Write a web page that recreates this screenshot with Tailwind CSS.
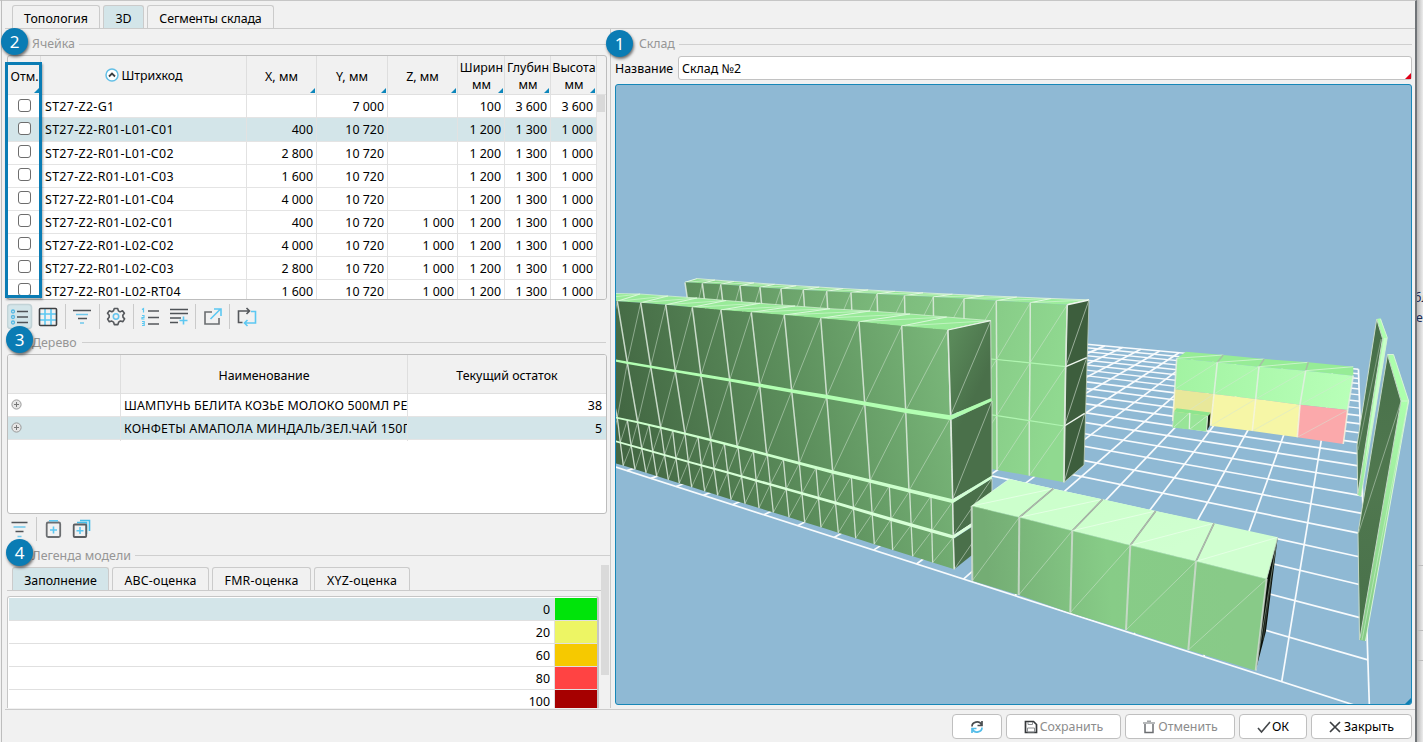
<!DOCTYPE html>
<html lang="ru">
<head>
<meta charset="utf-8">
<title>Склад</title>
<script src="https://cdn.jsdelivr.net/npm/@tailwindcss/browser@4"></script>
</head>
<body class="w-[1423px] h-[742px] overflow-hidden bg-[#e6e6e6] font-['Noto_Sans','Open_Sans',sans-serif] text-[12.4px] leading-4 text-black">
<div class="relative flex w-[1423px] h-[742px] overflow-hidden">
  <div class="relative flex flex-col w-[1417px] h-full shrink-0 bg-[#f1f1f1] border-t border-t-[#c6c6c6] border-r-2 border-r-[#707478]">
    <!-- page tabs -->
    <div class="flex gap-[3px] h-[28px] pt-1 border-b border-[#cbcbcb] ml-[5px] pl-[7px]">
      <div class="flex w-[88px] justify-center items-center pt-1 border border-b-0 border-[#cbcbcb] rounded-t-[3px] whitespace-nowrap tracking-[0.05px]">Топология</div>
      <div class="flex w-[41px] justify-center items-center pt-1 border border-b-0 border-[#cbcbcb] rounded-t-[3px] bg-[#d3e5e9]">3D</div>
      <div class="flex w-[127px] justify-center items-center pt-1 border border-b-0 border-[#cbcbcb] rounded-t-[3px] whitespace-nowrap tracking-[-0.1px]">Сегменты склада</div>
    </div>
    <div class="flex h-[680px]">
      <!-- left column -->
      <div class="flex flex-col w-[611px] shrink-0 h-[679px] pl-[7px] border-r border-[#c9c9c9] overflow-hidden">
        <div class="flex items-center h-[26px] shrink-0 pl-[25px] pr-1 pt-1 gap-1 text-[#969696]"><span class="w-[43px]">Ячейка</span><i class="flex-1 h-px bg-[#cfcfcf]"></i></div>
        <div class="flex flex-col h-[245px] w-[600px] shrink-0 border border-[#bdbdbd] rounded-[3px] overflow-hidden">
          <div id="cellHead" class="grid grid-cols-[33px_206px_70px_71px_70px_47px_46px_46px] h-[39px] shrink-0 border-b border-[#e0e0e0] text-center"></div>
          <div class="flex flex-1 overflow-hidden">
            <div id="cellRows" class="w-[589px]"></div>
            <div class="flex-1 bg-[#f1f1f1]"><div class="w-[8px] h-[17px] bg-[#d9d9d9]"></div></div>
          </div>
        </div>
        <!-- cell toolbar -->
        <div class="flex h-[33px] shrink-0 items-center">
          <svg width="260" height="33" viewBox="7 300 260 33" fill="none" stroke-width="1.6">
            <rect x="7.5" y="304.5" width="24" height="24" rx="3" fill="#d3e5e9" stroke="#c2d3d7"/>
            <g stroke="#4f5357"><path d="M17 311.500h11M17 317h11M17 322.500h11"/></g>
            <g stroke="#56b9e4" stroke-width="1.3"><circle cx="13" cy="311.500" r="1.500"/><circle cx="13" cy="317" r="1.500"/><circle cx="13" cy="322.500" r="1.500"/></g>
            <path stroke="#5cc8f2" d="M45 309v16M51 309v16M40 314h16M40 320h16"/><rect x="39.500" y="308.500" width="17" height="17" rx="1" stroke="#3d4043"/>
            <path stroke="#cacaca" stroke-width="1" d="M65.500 304v25M99.500 304v25M133.500 304v25M195.500 304v25M229.500 304v25"/>
            <path stroke="#4f5357" d="M73 310.500h18M78 318.500h9"/><path stroke="#6fc8ec" d="M76 314.500h12M80 323h4"/>
            <path stroke="#55585c" stroke-linejoin="round" d="M114.300 308.500h3.400l.7 2.400 1.700 1 2.400-1.200 1.900 2.500-1.600 2 .2 1.900 1.600 1.800-1.700 2.700-2.500-.6-1.800 1.200-.7 2.400h-3.600l-.8-2.500-1.700-1-2.500.7-1.700-2.700 1.600-1.800v-2l-1.700-2 1.900-2.500 2.400 1 1.700-1z"/><circle cx="116" cy="316.500" r="2.700" stroke="#64c4ee"/>
            <path stroke="#55585c" d="M148 311h11M148 317.500h11M148 324h11"/>
            <path stroke="#5cc8f2" stroke-width="1.2" d="M142 309.500l1.500-1v4M142 315.500h2v2h-2v1.500h2.500M142 321.500h2.200v4H142M142 323.500h2"/>
            <path stroke="#4f5357" d="M170 309.500h18M170 313.500h18M170 318h11M170 322.500h8"/><path stroke="#5cc8f2" d="M183.500 316.500v8M179.500 320.500h8"/>
            <path stroke="#6a6d70" d="M212 312h-7v12h14v-6"/><path stroke="#5cc8f2" d="M210.500 319l10-10M214 309h7v7"/>
            <path stroke="#55585c" d="M242.500 322.500h-4V311H249M246.500 308l3 3-3 3"/><path stroke="#5cc8f2" d="M251 311.500h4.500V323H245M247.500 320l-3 3 3 3"/>
          </svg>
        </div>
        <div class="flex items-center h-[21px] shrink-0 pl-[25px] pr-1 gap-1 pb-[2px] text-[#969696]"><span class="w-[46px]">Дерево</span><i class="flex-1 h-px bg-[#cfcfcf]"></i></div>
        <div class="flex flex-col h-[160px] w-[600px] shrink-0 border border-[#bdbdbd] rounded-[3px] bg-white overflow-hidden">
          <div class="grid grid-cols-[113px_287px_198px] h-[39px] shrink-0 bg-[#f1f1f1] border-b border-[#e0e0e0] text-center leading-[41px]"><div class="border-r border-[#dedede]"></div><div class="border-r border-[#dedede]">Наименование</div><div>Текущий остаток</div></div>
          <div id="treeRows"></div>
        </div>
        <div class="flex h-[32px] shrink-0 items-center">
          <svg width="100" height="32" viewBox="7 514 100 32" fill="none" stroke-width="1.600">
            <path stroke="#4f5357" d="M11.500 522.500h16M15.500 531.500h8"/><path stroke="#6fc8ec" d="M13.500 527h12M17.500 536.500h4"/>
            <path stroke="#cacaca" stroke-width="1" d="M36.500 517v24"/>
            <rect x="46.700" y="522.500" width="13.500" height="14.500" rx="1.500" stroke="#6b6e71" stroke-width="1.800"/><path stroke="#5cc8f2" d="M49 520.700h9M53.500 526.500v7M50 530h7"/>
            <path stroke="#42bde9" d="M77 522.500h9.500V534M80 520.500h9.500V531"/><rect x="73.700" y="524.500" width="12.500" height="12.500" rx="1" stroke="#5b5e61" stroke-width="1.800"/><path stroke="#5cc8f2" d="M80 527v7M76.500 530.700h7"/>
          </svg>
        </div>
        <div class="flex items-center h-[19px] shrink-0 pl-[25px] gap-1 text-[#969696]"><span class="w-[99px] whitespace-nowrap">Легенда модели</span><i class="flex-1 h-px bg-[#cfcfcf]"></i></div>
        <div class="flex h-[143px] shrink-0 overflow-hidden">
          <div class="w-[594px] shrink-0">
            <div class="flex gap-[3px] h-[26px] pl-[5px] pt-[2px] border-b border-[#cbcbcb]">
              <div class="flex w-[97px] justify-center items-center pt-[3px] border border-b-0 border-[#cbcbcb] rounded-t-[3px] bg-[#d3e5e9]">Заполнение</div>
              <div class="flex w-[97px] justify-center items-center pt-[3px] border border-b-0 border-[#cbcbcb] rounded-t-[3px] tracking-[0.15px]">ABC-оценка</div>
              <div class="flex w-[99px] justify-center items-center pt-[3px] border border-b-0 border-[#cbcbcb] rounded-t-[3px] tracking-[0.2px]">FMR-оценка</div>
              <div class="flex w-[96px] justify-center items-center pt-[3px] border border-b-0 border-[#cbcbcb] rounded-t-[3px] tracking-[0.2px]">XYZ-оценка</div>
            </div>
            <div id="legend" class="w-[592px] mt-[5px] h-[140px] border-2 border-l border-t border-[#c6c6c6] rounded-[3px] bg-white overflow-hidden pt-px pl-px"></div>
          </div>
          <div class="w-[8px] h-[110px] bg-[#dadada]"></div>
        </div>
      </div>
      <!-- warehouse view -->
      <div class="flex flex-col pl-[4px] w-[801px]">
        <div class="flex items-center h-[26px] pt-1 pl-6 gap-1 text-[#969696]"><span class="w-[36px] tracking-[-0.1px]">Склад</span><i class="flex-1 h-px bg-[#cfcfcf]"></i></div>
        <div class="flex h-[25px] items-center"><span class="w-[63px] whitespace-nowrap pt-[2px]">Название</span><div class="relative flex items-center flex-1 h-[24px] bg-white border border-[#c2c2c2] rounded-[3px] px-[3px] pt-[2px]">Склад №2<i class="absolute right-0 bottom-0 border-[3px] border-t-transparent border-l-transparent border-[#e00018]"></i></div></div>
        <div class="relative mt-1 w-[797px] h-[621px] bg-[#8fb9d4] border border-[#1787b8] rounded-[3px] overflow-hidden">
          <svg id="scene" class="block" width="796" height="620" viewBox="616 85 796 620"></svg>
          <svg class="absolute right-0 bottom-0" width="6" height="6"><path d="M6 0v6H0z" fill="#0d7fb4"/></svg>
        </div>
      </div>
    </div>
    <div class="ml-[5px] h-px bg-[#cbcbcb]"></div>
    <div class="flex justify-end gap-1 h-[32px] pt-[4px] pr-[3px] text-[#8c8c8c]">
      <div class="flex w-[50px] h-[25px] items-center justify-center bg-white border border-[#bfbfbf] rounded-[4px]"><svg width="16" height="16" fill="none" stroke-width="1.700"><path stroke="#4a4d50" d="M3 7.500a5 4.500 0 0 1 9.500-2M13 2v4.500H8.500"/><path stroke="#54bde9" d="M13 8.500a5 4.500 0 0 1-9.500 2M3 14V9.500h4.500"/></svg></div>
      <div class="flex w-[115px] h-[25px] items-center justify-center gap-[2px] bg-white border border-[#bfbfbf] rounded-[4px]"><svg width="14" height="14" fill="none" stroke="#35383b" stroke-width="1.700"><path d="M1.500 1.500h8l3 3v8h-11z"/><path stroke="#8c8f92" stroke-width="1" d="M4 2v2.500h4.500V2M3.500 8h7v4h-7z"/></svg>Сохранить</div>
      <div class="flex w-[110px] h-[25px] items-center justify-center gap-[2px] bg-white border border-[#bfbfbf] rounded-[4px]"><svg width="14" height="14" fill="none" stroke="#6b6e71" stroke-width="1.500"><path d="M3 4v8.500h8V4"/><path stroke="#a0a3a5" d="M1 3h12M5 1.300h4"/></svg>Отменить</div>
      <div class="flex w-[68px] h-[25px] items-center justify-center gap-[1px] bg-white border border-[#bfbfbf] rounded-[4px] text-black"><svg width="14" height="14" fill="none" stroke="#44474a" stroke-width="1.600"><path d="M1 8l3.500 4L13 2"/></svg>ОК</div>
      <div class="flex w-[101px] h-[25px] items-center justify-center gap-[3px] bg-white border border-[#bfbfbf] rounded-[4px] text-black"><svg width="12" height="12" fill="none" stroke="#3b3e41" stroke-width="1.700"><path d="M1 1l10 10M11 1L1 11"/></svg>Закрыть</div>
    </div>
  </div>
  <!-- window behind -->
  <div class="flex flex-col flex-1 overflow-hidden bg-linear-to-r from-[#b9b9b9] to-[#ececec] text-[#1c2b55] pt-[290px]"><span class="-ml-[3px]">бл</span><span class="mt-1 -ml-px">е</span><i class="mt-[239px] h-px bg-[#bcbcbc] shrink-0"></i><i class="mt-[64px] h-px bg-[#bcbcbc] shrink-0"></i><i class="mt-[29px] h-px bg-[#bcbcbc] shrink-0"></i></div>
  <!-- left window edge, highlight frame and numbered callouts -->
  <div class="absolute left-[1px] top-0 w-px h-full bg-[#bdbdbd]"></div>
  <div class="absolute left-[5px] top-[62px] w-[37px] h-[236px] border-[3px] border-[#0a7cb4] shadow-[1px_2px_2px_rgba(0,0,0,.3)]"></div>
  <div class="absolute left-[1px] top-[28px] size-[27px] rounded-full bg-[#0a7cb4] text-white text-[17px] leading-[27px] text-center shadow-[1px_2px_3px_rgba(0,0,0,.55)]">2</div>
  <div class="absolute left-[606px] top-[30px] size-[27px] rounded-full bg-[#0a7cb4] text-white text-[17px] leading-[27px] text-center shadow-[1px_2px_3px_rgba(0,0,0,.55)]">1</div>
  <div class="absolute left-[6px] top-[326px] size-[27px] rounded-full bg-[#0a7cb4] text-white text-[17px] leading-[27px] text-center shadow-[1px_2px_3px_rgba(0,0,0,.55)]">3</div>
  <div class="absolute left-[6px] top-[539px] size-[27px] rounded-full bg-[#0a7cb4] text-white text-[17px] leading-[27px] text-center shadow-[1px_2px_3px_rgba(0,0,0,.55)]">4</div>
</div>
<script>
const mark = '<svg class="absolute right-px bottom-px" width="5" height="5"><path d="M5 0v5H0z" fill="#0d86bb"/></svg>';
const sort = '<svg class="inline-block mr-[2px] mb-[3px]" width="14" height="14" fill="none"><circle cx="7" cy="7" r="6" fill="#fff" stroke="#62bfe6" stroke-width="1.500"/><path d="M4 8.500l3-3 3 3" stroke="#3c3f42" stroke-width="1.800"/></svg>';
const heads = ['Отм.', sort + 'Штрихкод', 'X, мм', 'Y, мм', 'Z, мм', 'Ширин<br>мм', 'Глубин<br>мм', 'Высота<br>мм'];
cellHead.innerHTML = heads.map((h, i) => `<div class="relative flex items-center justify-center overflow-hidden whitespace-nowrap border-r border-[#dedede] pt-[2px] leading-[17px] ${i > 4 || i < 2 ? 'pl-px' : ''}"><span>${h}</span>${i == 1 ? '' : mark}</div>`).join('');
const P = 'ST27-Z2-';
const rows = [
  [P + 'G1', '', '7 000', '', '100', '3 600', '3 600'],
  [P + 'R01-L01-C01', '400', '10 720', '', '1 200', '1 300', '1 000'],
  [P + 'R01-L01-C02', '2 800', '10 720', '', '1 200', '1 300', '1 000'],
  [P + 'R01-L01-C03', '1 600', '10 720', '', '1 200', '1 300', '1 000'],
  [P + 'R01-L01-C04', '4 000', '10 720', '', '1 200', '1 300', '1 000'],
  [P + 'R01-L02-C01', '400', '10 720', '1 000', '1 200', '1 300', '1 000'],
  [P + 'R01-L02-C02', '4 000', '10 720', '1 000', '1 200', '1 300', '1 000'],
  [P + 'R01-L02-C03', '2 800', '10 720', '1 000', '1 200', '1 300', '1 000'],
  [P + 'R01-L02-RT04', '1 600', '10 720', '1 000', '1 200', '1 300', '1 000']];
cellRows.innerHTML = rows.map((r, i) => `<div class="grid grid-cols-[33px_206px_70px_71px_70px_47px_46px_46px] ${i == 1 ? 'h-[24px]' : 'h-[23px]'} border-b border-[#e4e4e4] leading-[23px] whitespace-nowrap ${i == 1 ? 'bg-[#d3e5e9]' : 'bg-white'}"><div class="pl-[10px] ${i > 1 ? 'pt-[3px]' : 'pt-[4px]'} border-r border-[#e2e2e2]"><div class="size-[13px] border border-[#6d6d6d] rounded-[3px] bg-white"></div></div>` +
  r.map((c, j) => `<div class="border-r border-[#e2e2e2] ${j ? 'text-right pr-[3px]' : 'pl-[4px] tracking-[0.33px]'}">${c}</div>`).join('') + '</div>').join('');
const plus = '<svg width="11" height="11" fill="none" stroke="#777"><circle cx="5.500" cy="5.500" r="4.600" fill="#e6e6e6" stroke="#999"/><path d="M3 5.500h5M5.500 3v5"/></svg>';
treeRows.innerHTML = [['ШАМПУНЬ БЕЛИТА КОЗЬЕ МОЛОКО 500МЛ РЕ', 38], ['КОНФЕТЫ АМАПОЛА МИНДАЛЬ/ЗЕЛ.ЧАЙ 150Г', 5]].map((r, i) =>
  `<div class="grid grid-cols-[113px_287px_198px] h-[23px] leading-[24px] whitespace-nowrap border-b border-[#e4e4e4] ${i ? 'bg-[#d3e5e9]' : 'bg-white'}"><div class="pl-[3px] pt-[5px] border-r border-[#e2e2e2]">${plus}</div><div class="pl-[3px] overflow-hidden border-r border-[#e2e2e2] ${i ? 'tracking-[0.2px]' : 'tracking-[0.17px]'}">${r[0]}</div><div class="text-right pr-[4px]">${r[1]}</div></div>`).join('');
legend.innerHTML = [[0, '#00e40a'], [20, '#edf564'], [60, '#f6c900'], [80, '#ff4343'], [100, '#a60000']].map((r, i) =>
  `<div class="flex h-[23px] border-b border-[#e0e0e0] leading-[23px] ${i ? '' : 'bg-[#d3e5e9]'}"><div class="flex-1 text-right pr-[4px] border-r border-[#e0e0e0]">${r[0]}</div><div class="w-[42px]" style="background:${r[1]}"></div></div>`).join('');

/* 3D view */
let out = '';
const poly = (p, f) => out += `<polygon points="${p.map(q => q.join()).join(' ')}" fill="${f}"/>`;
const seg = (a, b, c = '#e2eee2', w = 1.1, o = 1) => out += `<line x1="${a[0]}" y1="${a[1]}" x2="${b[0]}" y2="${b[1]}" stroke="${c}" stroke-width="${w}" stroke-opacity="${o}"/>`;
const pl = (p, c, w) => out += `<polyline points="${p.map(q => q.join()).join(' ')}" fill="none" stroke="${c}" stroke-width="${w}"/>`;
const face = (t, b, f) => poly([...t, ...[...b].reverse()], f);
const cells = (t, b, w = 1.2, c = '#dfecdf', o = .85) => t.forEach((p, i) => { seg(p, b[i], c, w, o); if (t[i + 1]) seg(b[i], t[i + 1], '#d4e6d4', 1, .5); });
const grad = (id, x1, y1, x2, y2, ...s) => out += `<linearGradient id="${id}" gradientUnits="userSpaceOnUse" x1="${x1}" y1="${y1}" x2="${x2}" y2="${y2}">${s.map((c, i) => `<stop offset="${i / (s.length - 1)}" stop-color="${c}"/>`).join('')}</linearGradient>`;
grad('gA', 616, 420, 950, 340, '#426642', '#5b8d5b', '#7ab87a');
grad('gAs', 950, 340, 992, 360, '#5a8a5a', '#4a704a');
grad('gB', 690, 290, 1067, 350, '#5c8e5c', '#7bb97b', '#90d990');
grad('gBt', 690, 282, 1089, 300, '#8fdc8f', '#9eee9e');
grad('gC', 990, 600, 1230, 580, '#74ad74', '#87cc87', '#88ca88');
grad('gCt', 1120, 490, 1150, 560, '#ccffcc', '#d0ffd0');
grad('gD', 1175, 370, 1350, 390, '#a2f3a2', '#b8ffb8');
grad('gP', 1375, 330, 1360, 640, '#48704a', '#50784f', '#48704a');
grad('gL', 1400, 400, 1364, 640, '#adffad', '#85c985');

/* floor grid */
const G = (u, v) => { const w = 1 + .1193 * v + .0632 * u; return [(1369.5 + 161.56 * v - 6.79 * u) / w, (710 + 28.57 * v + 14.79 * u) / w]; };
for (let v = 0; v <= 22; v++) seg(G(0, v), G(24, v), '#f8fbfd', v > 14 ? 1.4 : 1.7);
for (let u = 0; u <= 24; u++) seg(G(u, 0), G(u, 22), '#f8fbfd', 1.7);

/* rear rack */
const bt = [[685,282.3],[702.3,283.3],[720.7,284.3],[740,285.7],[760,287.3],[781,288.7],[803.3,290],[826.7,291.3],[851,292.5],[877,294],[904.5,295.6],[933.3,297],[964,298.7],[996.3,300.7],[1030.3,302.7],[1067.3,304.7]];
const b1 = bt.map((p, i) => [p[0] + 7 - i * .58, 330 + (p[0] - 685) * .096]);
b1[13] = [996.6,359.5]; b1[14] = [1030,362.8]; b1[15] = [1065.7,366.7];
const b2 = [[990,414.7],[996.8,415.7],[1029.3,420.7],[1064.4,426]], b3 = [[990,468.7],[997,470],[1029.3,475.7],[1064,482.3]];
const bk = bt.map((p, i) => [p[0] + 12 + i * .65, 278.6 + i * 1.42]);
face(bk, bt, 'url(#gBt)');
bt.forEach((p, i) => { seg(p, bk[i], '#e6f8e6', 1); if (bk[i + 1]) seg(p, bk[i + 1], '#d8f6d8', .8, .8); });
pl(bk, '#e0f3e0', .8);
face(bt, b1, 'url(#gB)'); cells(bt, b1, 1.5);
const bm = [[964,356.500], ...b1.slice(13)];
face(bm, [[964,410], ...b2.slice(1)], 'url(#gB)'); face([[964,410], ...b2.slice(1)], [[964,464], ...b3.slice(1)], 'url(#gB)');
cells(bm, [[965,410.500], ...b2.slice(1)], 1.5); cells([[965,410.500], ...b2.slice(1)], [[965,464], ...b3.slice(1)], 1.5);
pl(bm, '#b0f5b0', 1.2); pl(b2, '#b0f5b0', 1.2);
poly([[1067.3,304.7],[1089,300],[1084,465],[1064,482.3]], '#3d5e3d');
[[[1067.3,304.7],[1089,300],[1065.7,366.7]],[[1065.7,366.7],[1086.7,357.7],[1064.4,426]],[[1064.4,426],[1084.7,413.3],[1064,482.3]]].forEach(([a, b, c]) => { seg(a, b, '#f0f8f0', 1.4); seg(b, c, '#cfdccf', .9, .7); });
pl([[1067.3,304.7],[1065.7,366.7],[1064,482.3]], '#dce8dc', 1.5); pl([[1089,300],[1084,465],[1064,482.3]], '#c0d0c0', .8);

/* front rack */
const f0 = [[595,299],[617.3,301.3],[640.7,302.7],[665.7,304.7],[692.3,307.3],[721,310],[751.3,312.3],[784.3,315],[820.7,318.3],[859,321.7],[901.7,326],[948,330]];
const f1 = [[605,358.7],[627.3,362.7],[650.7,366.7],[675.3,371],[701,375.3],[729.7,380],[759.7,385.3],[791.7,391],[826.7,396.8],[864.7,403.5],[905.7,410.7],[950.7,417.6]];
const f2 = [[617.3,417.9],[637.7,422.3],[660.7,427.7],[685,433.7],[710.7,440],[737.3,446.9],[766.7,454.6],[799.3,463.3],[832.7,472],[870,480.9],[909,490.7],[953,501.2]];
const fb = [[594,293],[640,294],[668,296],[697,298],[726,300.5],[760,303.3],[795,306],[830,308.7],[870,311],[910,314],[946.7,317],[990.5,320.7]];
face(fb, f0, '#98ea98');
f0.forEach((p, i) => { seg(p, fb[i], '#e0f8e0', 1.1, .9); if (fb[i + 1]) seg(p, fb[i + 1], '#d0f6d0', 1, .7); });
pl(fb, '#d8f3d8', .7);
const X2 = [22,52,83,117,152,188,225,264,302,343,384,430,472,520,568,618,668,724,780,838,899,963,1029];
const X4 = [40,75,108,140,175,208,245,284,323,363,405,447,490,537,584,633,685,737,793,848,908,968,1033];
const lerpY = (P, x) => { let i = 0; while (i < P.length - 2 && P[i + 1][0] < x) i++; const [a, b] = [P[i], P[i + 1]]; return a[1] + (b[1] - a[1]) * (x - a[0]) / (b[0] - a[0]); };
const L2 = [[595,412], ...f2], L3 = [[595,435.500],[616,441.3],[643.3,449],[690,462.3],[728.3,472.7],[772.3,485],[836.7,503.3],[890,519],[953.3,537]];
const L4 = [[595,457.500],[616,463.3],[731,499.500],[788.3,517],[838.3,532.7],[892.7,550],[954.3,569.3]];
const s2 = X2.map(x => { x = 610 + x / 3; return [x, lerpY(L2, x)]; });
const s4 = X4.map(x => { x = 610 + x / 3; return [x, lerpY(L4, x)]; });
const s3 = s2.map((p, i) => { const x = p[0] + (s4[i][0] - p[0]) * .5; return [x, lerpY(L3, x)]; });
face([f0[0], ...f0.slice(1)], [[595,457.500], ...s4], 'url(#gA)');
cells(f0, f1, 1.5); cells(f1, f2, 1.5); cells(s2, s3, 1.3); cells(s3, s4, 1.3);
seg([612,441],[617.3,418],'#d4e6d4',1,.5);
[[948,330,990.7,320.7,950.7,415,991.3,398.7],[951,420,992,401,952.7,499,992,476],[952.7,503,992,478.5,953.3,535,992,510],[953.3,539,992,514,954.3,569.3,992,539]].forEach(k => {
  poly([[k[0],k[1]],[k[2],k[3]],[k[6],k[7]],[k[4],k[5]]], 'url(#gAs)');
  seg([k[0],k[1]],[k[4],k[5]], '#dce8dc', 1.5); seg([k[2],k[3]],[k[6],k[7]], '#c4d6c4', 1); seg([k[4],k[5]],[k[2],k[3]], '#c8d8c8', 1, .6);
});
seg([948,330],[990.7,320.7],'#e6f2e6',1.2);
const strip = (p, a, c) => poly([...p.map(q => [q[0], q[1] - a * (.45 + .55 * (q[0] - 600) / 350)]), ...[...p].reverse().map(q => [q[0], q[1] + a * (.45 + .55 * (q[0] - 600) / 350)])], c);
strip(f1, 2.400, '#b2ffb2'); strip(L2, 2, '#ccffcc'); strip(L3, 1.800, '#d6ffd6');
poly([[950.7,415.300],[991.3,398],[992,401],[950.7,420]], '#b0fcb0');
poly([[952.7,499.500],[992,475.500],[992,478.500],[952.7,503.300]], '#d2ffd2');
poly([[953.3,535.300],[992,510],[992,513.500],[953.3,538.700]], '#daffda');

/* row of five boxes */
const c0 = [[1009.3,479],[1053.3,488.7],[1102.7,499.3],[1155.7,511],[1214,523.3],[1277.7,537.3]];
const c1 = [[971.7,506],[1019.3,517.3],[1072.3,530.7],[1130.3,545.3],[1196,561.3],[1266.7,579]];
const c2 = [[972.3,580.7],[1018.7,595],[1070.3,612.7],[1126,630],[1188.3,650],[1255.7,670.7]];
poly([[1266.7,579],[1277.7,537.3],[1266,631],[1255.7,670.7]], '#0b120b');
seg([1277,540],[1257,664],'#8fa08f',.7); seg([1271,580],[1263,640],'#566056',.6);
face(c0, c1, 'url(#gCt)'); face(c1, c2, 'url(#gC)');
c1.forEach((p, i) => { if (i && i < 5) { seg(p, c0[i], '#939c93', 1.6); seg(p, c0[i], '#e8f4e8', .6, .6); } if (c0[i + 1]) seg(p, c0[i + 1], '#e8ffe8', 1, .8); });
cells(c1, c2, 2, '#cfdacf'); pl(c1, '#bdf0bd', .5);
seg(c0[5], c1[5], '#c0d4c0', .8); seg(c0[0], c1[0], '#e4ffe4', .7);

/* coloured far boxes */
const d0 = [[1186,351.7],[1223.3,355],[1264.3,359],[1308.3,362.3],[1353.3,366.7]];
const d1 = [[1176.7,358.3],[1217.3,362.3],[1259,366.7],[1305.7,370.7],[1353.3,375.7]];
const d2 = [[1174.7,389.3],[1214,394],[1255.7,399],[1300,404.7],[1347.7,410]];
const d3 = [[1172.7,421],[1210.7,425.7],[1252.3,431],[1297.3,437.3],[1343.3,444]];
face(d0, d1, '#96ec96'); face(d1, d2, 'url(#gD)');
face(d2.slice(0, 2), d3.slice(0, 2), '#e8e89a'); face(d2.slice(1, 4), d3.slice(1, 4), '#f6f6a6'); face(d2.slice(3), d3.slice(3), '#fba9ab');
d1.forEach((p, i) => { if (i && i < 4) seg(p, d0[i], '#a5c0a5', 1.500); if (d0[i + 1]) seg(p, d0[i + 1], '#dcf6dc', .9, .8); });
cells(d1, d2, 1.6, '#e4eee4'); cells(d2, d3, 1.6, '#f4f4e0');
poly([[1210,414],[1210.500,412.500],[1209.500,426],[1206.500,431.500],[1207.500,416]], '#1b251b');
poly([[1176.500,408.300],[1210.500,412.500],[1208,416],[1174,411.500]], '#8ee58e');
poly([[1174,411.500],[1208,416],[1206.500,431.500],[1172.500,427.500]], '#98e498');
seg([1189.8,413],[1189.3,429],'#e2f2e2',1.300); seg([1174,427],[1189.5,413],'#d8f0d8',.8,.8); seg([1190,429],[1207,416],'#d8f0d8',.8,.8); seg([1207.500,416],[1206.500,431],'#d4e6d4',1.2); seg([1174,411.500],[1172.500,427.500],'#d4e6d4',.8);

/* wall panels */
poly([[1376.700,319],[1380.700,318.300],[1387.300,337.700],[1361,496.500],[1357.700,495],[1382.500,338.500]], 'url(#gL)');
poly([[1384,338],[1387.300,337.700],[1375,412],[1364,470],[1368,440]], '#c8ffc8');
poly([[1376.700,319],[1382.500,338.500],[1358,493],[1357,445]], 'url(#gP)');
pl([[1357.700,495],[1357,445],[1376.700,319],[1382.500,338.500],[1358,493]], '#c9dcc9', 1); seg([1380.500,319],[1387.300,337.700],'#d8f0d8',1); seg([1387.300,337.700],[1361,496.500],'#d8f0d8',.8); seg([1358,450],[1381,339],'#9fb79f',.8,.8);
poly([[1387.500,354.500],[1393.500,354.500],[1408.700,401],[1365.500,641],[1359.500,640],[1401,401]], 'url(#gL)');
poly([[1387.500,354.500],[1401,401],[1360,638],[1358,533]], 'url(#gP)');
pl([[1359.500,640],[1358,533],[1387.500,354.500],[1401,401],[1360,638]], '#c4d8c4', 1); pl([[1387.500,354.500],[1393.500,354.500],[1408.700,401],[1365.500,641]], '#d8f4d8', 1);
seg([1401,401],[1408.700,401],'#d8f4d8',.8); seg([1358.500,533],[1400.500,403],'#b4c8b4',.8,.8); seg([1408,402],[1362,640],'#d4f4d4',.8,.7);
scene.innerHTML = out;
</script>
</body>
</html>
